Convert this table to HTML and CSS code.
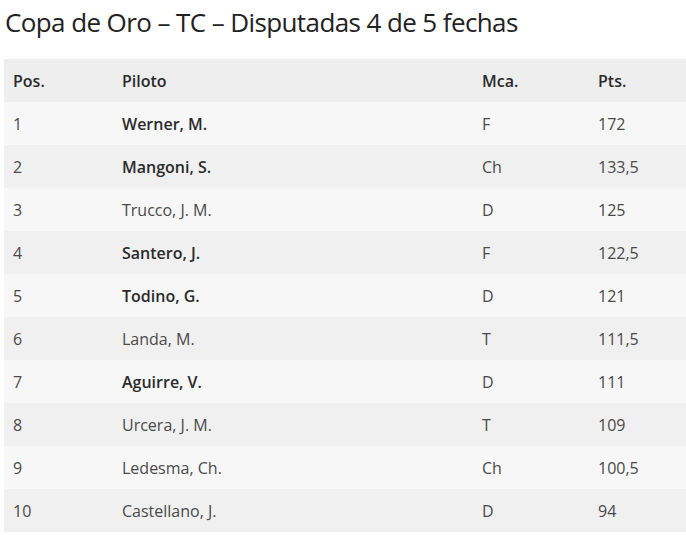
FILE: index.html
```html
<!DOCTYPE html>
<html lang="es">
<head>
<meta charset="utf-8">
<link rel="stylesheet" href="styles.css">
</head>
<body>
<h2 class="title">Copa de Oro – TC – Disputadas 4 de 5 fechas</h2>
<table class="standings">
  <thead>
    <tr><th class="c-pos">Pos.</th><th class="c-name">Piloto</th><th class="c-make">Mca.</th><th class="c-pts">Pts.</th></tr>
  </thead>
  <tbody>
    <tr><td>1</td><td class="strong">Werner, M.</td><td>F</td><td>172</td></tr>
    <tr><td>2</td><td class="strong">Mangoni, S.</td><td>Ch</td><td>133,5</td></tr>
    <tr><td>3</td><td>Trucco, J. M.</td><td>D</td><td>125</td></tr>
    <tr><td>4</td><td class="strong">Santero, J.</td><td>F</td><td>122,5</td></tr>
    <tr><td>5</td><td class="strong">Todino, G.</td><td>D</td><td>121</td></tr>
    <tr><td>6</td><td>Landa, M.</td><td>T</td><td>111,5</td></tr>
    <tr><td>7</td><td class="strong">Aguirre, V.</td><td>D</td><td>111</td></tr>
    <tr><td>8</td><td>Urcera, J. M.</td><td>T</td><td>109</td></tr>
    <tr><td>9</td><td>Ledesma, Ch.</td><td>Ch</td><td>100,5</td></tr>
    <tr><td>10</td><td>Castellano, J.</td><td>D</td><td>94</td></tr>
  </tbody>
</table>
</body>
</html>
```
FILE: styles.css
```css
html, body {
  margin: 0;
  padding: 0;
  background: #ffffff;
  overflow: hidden;
}
body {
  padding: 0 0 0 4px;
  font-family: "Open Sans", "Liberation Sans", sans-serif;
  color: #444;
  width: 700px;
}
.title {
  margin: 0;
  padding: 4px 0 0 1px;
  height: 59px;
  box-sizing: border-box;
  font-size: 26px;
  line-height: 36px;
  font-weight: 500;
  color: #222222;
  letter-spacing: -0.6px;
}
.standings {
  border-collapse: collapse;
  width: 700px;
  table-layout: fixed;
  font-size: 16px;
}
.standings th, .standings td {
  height: 43px;
  padding: 0 0 0 9px;
  text-align: left;
  vertical-align: middle;
  box-sizing: border-box;
}
.standings th {
  font-weight: 600;
  color: #2b2b2b;
  background: #eeeeee;
}
.c-pos { width: 109px; }
.c-name { width: 360px; }
.c-make { width: 116px; }
.standings td {
  color: #4a4a4a;
  font-weight: 400;
}
.standings td.strong {
  font-weight: 600;
  color: #2b2b2b;
}
.standings tbody tr:nth-child(odd) { background: #f7f7f7; }
.standings tbody tr:nth-child(even) { background: #f0f0f0; }
```
